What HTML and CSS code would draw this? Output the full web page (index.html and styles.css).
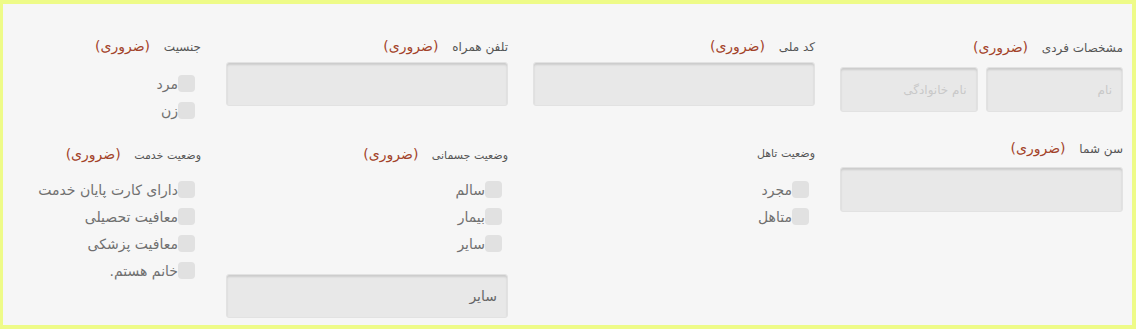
FILE: index.html
```html
<!doctype html>
<html lang="fa" dir="rtl">

<head>
    <meta charset="utf-8">
    <title>فرم مشخصات</title>

    <link rel="stylesheet" href="styles.css">
</head>

<body>
    <form name="infoform" class="panel" method="post" action="">

        <!-- ردیف اول -->
        <div class="field field-name">
            <div class="label">مشخصات فردی <span class="req">(ضروری)</span></div>
            <div class="pair">
                <input type="text" class="box" placeholder="نام" />
                <input type="text" class="box" placeholder="نام خانوادگی" />
            </div>
        </div>

        <div class="field">
            <div class="label">کد ملی <span class="req">(ضروری)</span></div>
            <input type="text" class="box" />
        </div>

        <div class="field">
            <div class="label">تلفن همراه <span class="req">(ضروری)</span></div>
            <input type="text" class="box" />
        </div>

        <div class="field">
            <div class="label">جنسیت <span class="req">(ضروری)</span></div>
            <ul class="opts opts-top">
                <li><span class="chk"></span>مرد</li>
                <li><span class="chk"></span>زن</li>
            </ul>
        </div>

        <!-- ردیف دوم -->
        <div class="field row2 field-age">
            <div class="label">سن شما <span class="req">(ضروری)</span></div>
            <input type="text" class="box" />
        </div>

        <div class="field row2">
            <div class="label small">وضعیت تاهل</div>
            <ul class="opts">
                <li><span class="chk"></span>مجرد</li>
                <li><span class="chk"></span>متاهل</li>
            </ul>
        </div>

        <div class="field row2">
            <div class="label small">وضعیت جسمانی <span class="req">(ضروری)</span></div>
            <ul class="opts">
                <li><span class="chk"></span>سالم</li>
                <li><span class="chk"></span>بیمار</li>
                <li><span class="chk"></span>سایر</li>
            </ul>
            <input type="text" class="box box-other" value="سایر" />
        </div>

        <div class="field row2">
            <div class="label small">وضعیت خدمت <span class="req">(ضروری)</span></div>
            <ul class="opts">
                <li><span class="chk"></span>دارای کارت پایان خدمت</li>
                <li><span class="chk"></span>معافیت تحصیلی</li>
                <li><span class="chk"></span>معافیت پزشکی</li>
                <li><span class="chk"></span>خانم هستم.</li>
            </ul>
        </div>

    </form>
</body>

</html>
```

FILE: styles.css
```css
html, body {
    margin: 0;
    background-color: #ffffff;
}
body {
    font-family: "DejaVu Sans", sans-serif;
    color: #555;
}
.panel {
    box-sizing: border-box;
    width: 1136px;
    height: 329px;
    background-color: #f6f6f6;
    border-style: solid;
    border-color: #eefb88;
    border-width: 4px 4px 4px 3px;
    padding: 0 9px 0 0;
    display: grid;
    grid-template-columns: 283px 282px 282px 1fr;
    grid-template-rows: 120px 1fr;
    column-gap: 25px;
    overflow: hidden;
}
.field {
    padding-top: 32px;
    min-width: 0;
}
.field.row2 {
    padding-top: 20px;
}
.field.field-age {
    padding-top: 14px;
}
.label {
    font-size: 12px;
    line-height: 20px;
    height: 20px;
    color: #555;
    white-space: nowrap;
}
.label.small {
    font-size: 11px;
}
.label .req {
    font-size: 14px;
    color: #a3432a;
    margin-right: 10px;
}
.box {
    display: block;
    box-sizing: border-box;
    width: 100%;
    height: 44px;
    margin: 6px 0 0 0;
    border: solid #e2e2e2 1px;
    border-radius: 3px;
    background-color: #e8e8e8;
    box-shadow: inset 0 2px 2px rgba(0, 0, 0, 0.12);
    font-family: "DejaVu Sans", sans-serif;
    font-size: 12px;
    color: #777;
    padding: 0 10px;
    text-align: right;
    direction: rtl;
}
.box::placeholder {
    color: #c9c9c9;
}
.field-name .label {
    margin-top: 1px;
}
.pair {
    display: flex;
    gap: 8px;
    margin-top: 10px;
}
.pair .box {
    margin: 0;
    flex: 1;
    height: 45px;
}
.field-age .box {
    margin-top: 9px;
    height: 45px;
}
.box-other {
    margin-top: 17px;
    font-size: 14px;
    color: #666;
}
.opts {
    list-style: none;
    margin: 12px 0 0 0;
    padding: 0 6px 0 0;
}
.opts-top {
    margin-top: 14px;
}
.opts li {
    display: flex;
    align-items: center;
    height: 27px;
    font-size: 14px;
    color: #707070;
    white-space: nowrap;
}
.chk {
    display: inline-block;
    width: 17px;
    height: 17px;
    border-radius: 4px;
    background-color: #e1e1e1;
}
```
